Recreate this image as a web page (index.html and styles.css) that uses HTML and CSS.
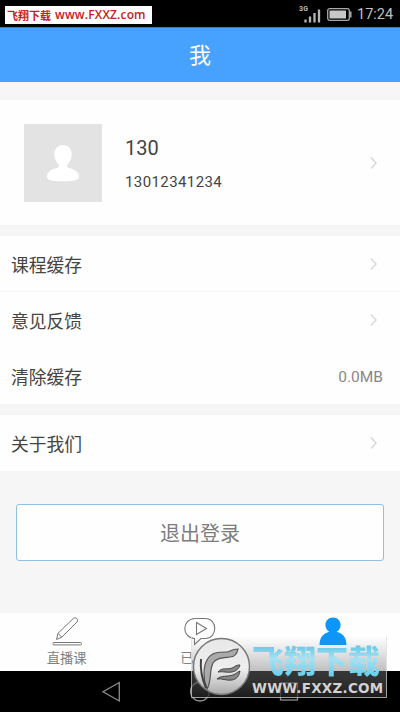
FILE: index.html
```html
<!DOCTYPE html>
<html lang="zh-CN">
<head>
<meta charset="utf-8">
<title>我</title>
<link rel="stylesheet" href="styles.css">
</head>
<body>
<div class="screen">
  <div class="status">
    <div class="site-tag"><span class="site-name">飞翔下载</span><span class="site-url">www.FXXZ.com</span></div>
    <div class="indicators">
      <svg class="signal" width="23" height="20" viewBox="0 0 23 20">
        <text x="0" y="7.500" class="net" textLength="9">3G</text>
        <path d="M6.500 16.500v3M11 13.500v6M15.500 10v9.500M20 6.500v13" stroke="#b5b5b5" stroke-width="2.300"/>
      </svg>
      <svg class="battery" width="25" height="13" viewBox="0 0 25 13">
        <rect x=".7" y=".7" width="21.600" height="11.600" rx="2" fill="none" stroke="#aaa" stroke-width="1.300"/>
        <rect x="2.500" y="2.500" width="16.500" height="8" fill="#c8c8c8"/>
        <path d="M23.800 3.500v6" stroke="#aaa" stroke-width="1.500"/>
      </svg>
      <span class="clock">17:24</span>
    </div>
  </div>
  <header class="title">我</header>
  <main class="content">
    <section class="profile">
      <div class="avatar">
        <svg width="78" height="78" viewBox="0 0 78 78"><path fill="#fff" d="M39 21c-5 0-8.700 3.900-8.700 9 0 5.300 2.300 8.400 4.400 10.700 1.200 2.200-.5 2.800-3.700 3.900-4.700 1.600-8 4-8 8.100 0 3.500 4.500 4.500 16 4.500s16-1 16-4.500c0-4.100-3.300-6.500-8-8.100-3.200-1.100-4.900-1.700-3.700-3.900 2.100-2.300 4.400-5.400 4.400-10.700 0-5.100-3.700-9-8.700-9z"/></svg>
      </div>
      <div class="who"><div class="name">130</div><div class="phone">13012341234</div></div>
      <svg class="chevron" width="8" height="14" viewBox="0 0 8 14"><path d="M1 1.500l5 5.500-5 5.500"/></svg>
    </section>
    <section class="group">
      <div class="row divided"><span class="label">课程缓存</span><svg class="chevron" width="8" height="14" viewBox="0 0 8 14"><path d="M1 1.500l5 5.500-5 5.500"/></svg></div>
      <div class="row"><span class="label">意见反馈</span><svg class="chevron" width="8" height="14" viewBox="0 0 8 14"><path d="M1 1.500l5 5.500-5 5.500"/></svg></div>
      <div class="row"><span class="label">清除缓存</span><span class="size">0.0MB</span></div>
    </section>
    <section class="group">
      <div class="row"><span class="label">关于我们</span><svg class="chevron" width="8" height="14" viewBox="0 0 8 14"><path d="M1 1.500l5 5.500-5 5.500"/></svg></div>
    </section>
    <div class="logout">退出登录</div>
  </main>
  <nav class="tabs">
    <div class="tab">
      <svg width="32" height="32" viewBox="0 0 32 32" fill="none" stroke="#777" stroke-width="1"><path d="M5.500 25.500l1.500-6.200L22.300 4.500c2.600-2 5.500.8 3.600 3.600L10.800 23.200zM7 19.300l3.800 3.900"/><rect x="2" y="28.500" width="28.500" height="2.400" rx="1"/></svg>
      <span>直播课</span>
    </div>
    <div class="tab covered">
      <svg width="32" height="32" viewBox="0 0 32 32" fill="none" stroke="#777" stroke-width="1.100"><path d="M11 4.500h10c13 0 13 20 0 20h-4L10.500 30.500v-6C-3 23-2 5 11 4.500z"/><path d="M12.500 8.500l10 6-10 6z"/></svg>
      <span>已</span>
    </div>
    <div class="tab">
      <svg width="32" height="32" viewBox="0 0 32 32"><path fill="#0b96fa" d="M16 3.500c-4.500 0-7.600 3.300-7.600 7.500 0 3 1.600 5.600 4 6.800C6 19.300 2.500 24 2.500 31h27c0-7-3.500-11.700-9.900-13.200 2.400-1.200 4-3.800 4-6.800 0-4.200-3.100-7.500-7.600-7.500z"/></svg>
    </div>
  </nav>
  <div class="keys">
    <svg width="400" height="41" viewBox="0 0 400 41" fill="none" stroke="#8c8c8c" stroke-width="1.300"><path d="M119.300 11.500v18.500L103 20.700z"/><circle cx="200" cy="20.500" r="9.500"/><rect x="280.500" y="12" width="17" height="17"/></svg>
  </div>
  <div class="watermark">
    <svg class="badge" width="196" height="63" viewBox="0 0 196 63">
      <defs>
        <linearGradient id="shade" x1="0" y1="0" x2="0" y2="1"><stop offset="0" stop-color="#888" stop-opacity="0"/><stop offset=".55" stop-color="#777" stop-opacity=".45"/><stop offset="1" stop-color="#222" stop-opacity=".75"/></linearGradient>
        <linearGradient id="disc" x1="0" y1="0" x2="0" y2="1"><stop offset="0" stop-color="#e8e8e8"/><stop offset=".55" stop-color="#eee"/><stop offset="1" stop-color="#aaa"/></linearGradient>
      </defs>
      <rect x=".5" y=".5" width="195" height="61" fill="url(#shade)"/>
      <path d="M.5 0v61.500h195V0" fill="none" stroke="#ddd" stroke-opacity=".7"/>
      <circle cx="30.500" cy="30.500" r="28" fill="url(#disc)" stroke="#777" stroke-width="1.400"/>
      <path d="M16 53c-4-10-4-22 0-29 4-8 12-8 20-8 3 0 4-3 11-3-1 5-3 8-8 8-8 1-14 1-17 6-4 8-1 17-6 26z" fill="#aaa" stroke="#555" stroke-width="1.200"/>
      <path d="M10 23c-1 11 1 20 5 29" fill="none" stroke="#444" stroke-width="2"/>
      <path d="M27 36c4-5 9-2 14-4 3-1 3-3 8-3-1 3-3 6-8 7-5 1-9-1-14 0zM26 43c5-4 10-2 16-4 3-1 4-3 7-4-1 5-3 8-8 9-6 1-10-2-15-1z" fill="#888" stroke="#444"/>
    </svg>
    <div class="marks"><div class="mark-name">飞翔下载</div><div class="mark-url">WWW.FXXZ.COM</div></div>
  </div>
</div>
</body>
</html>
```
FILE: styles.css
```css
* { box-sizing: border-box; }
body { margin: 0; font-family: Roboto, "Noto Sans CJK SC", sans-serif; color: #444; }
svg { display: block; flex: none; }
.screen { position: relative; width: 400px; height: 712px; display: flex; flex-direction: column; background: #f6f6f6; overflow: hidden; }
.status { height: 27px; flex: none; background: #000; display: flex; justify-content: space-between; padding: 0 7px 0 5px; }
.site-tag { width: 147px; height: 18px; margin-top: 6px; padding-left: 2px; background: #fff; color: #c8201c; display: flex; align-items: center; gap: 4px; white-space: nowrap; }
.site-name { font: bold 11px/18px "Noto Sans CJK SC", sans-serif; }
.site-url { font: 600 12px/18px "Open Sans", sans-serif; letter-spacing: .15px; }
.indicators { display: flex; align-items: center; height: 28px; }
.signal { margin: -2px 5px 0 0; overflow: visible; }
.net { font: bold 7px Roboto, sans-serif; fill: #bbb; }
.clock { font-size: 14.500px; color: #c0c0c0; margin-left: 5px; width: 36px; white-space: nowrap; }
.title { height: 55px; flex: none; background: #46a1ff; color: #fff; font-size: 22px; line-height: 56px; text-align: center; border-top: 1px solid #3b78b5; }
.content { height: 531px; flex: none; padding-top: 18px; display: flex; flex-direction: column; gap: 11px; }
.profile { height: 125px; background: #fefefe; display: flex; align-items: center; padding: 0 22px 0 24px; }
.avatar { width: 78px; height: 78px; background: #e3e3e3; }
.who { margin-left: 23px; flex: 1; padding-top: 2px; }
.name { font-size: 20px; line-height: 24px; margin-bottom: 12px; }
.phone { font-size: 15px; line-height: 20px; letter-spacing: .4px; }
.chevron path { fill: none; stroke: #d9d9d9; stroke-width: 1.600; }
.group { background: #fefefe; }
.row { height: 56px; display: flex; align-items: center; justify-content: space-between; padding: 0 22px 0 11px; font-size: 17.800px; line-height: 26px; }
.label { padding-top: 3px; }
.divided { box-shadow: inset 0 -1px #f6f6f6; }
.size { font-size: 15.500px; color: #888; margin-right: -5px; padding-top: 2px; }
.logout { height: 57px; margin: 22px 16px 0; border: 1.500px solid #91bfe4; border-radius: 3px; background: #fefefe; color: #7d7d7d; font-size: 20px; line-height: 58px; text-align: center; }
.tabs { height: 58px; flex: none; background: #fefefe; display: grid; grid-template-columns: repeat(3, 1fr); }
.tab { display: flex; flex-direction: column; align-items: center; font-size: 13.300px; line-height: 20px; color: #808080; padding-top: 1px; }
.tab span { margin-top: 3px; }
.covered span { margin-right: 26px; }
.keys { height: 41px; flex: none; background: #000; }
.watermark { position: absolute; left: 191px; top: 636px; width: 196px; height: 63px; display: grid; }
.badge, .marks { grid-area: 1 / 1; }
.marks { padding: 4px 0 0 61px; }
.mark-name { font: 900 32px/38px "Noto Sans CJK SC", sans-serif; white-space: nowrap; color: transparent; background: linear-gradient(#4dbde0, #a6e2f3 50%, #5fcbeb) text; }
.mark-url { font: bold 13.500px/14px "DejaVu Sans", sans-serif; letter-spacing: .25px; color: #d2d2d2; margin-top: 3px; white-space: nowrap; }
```
